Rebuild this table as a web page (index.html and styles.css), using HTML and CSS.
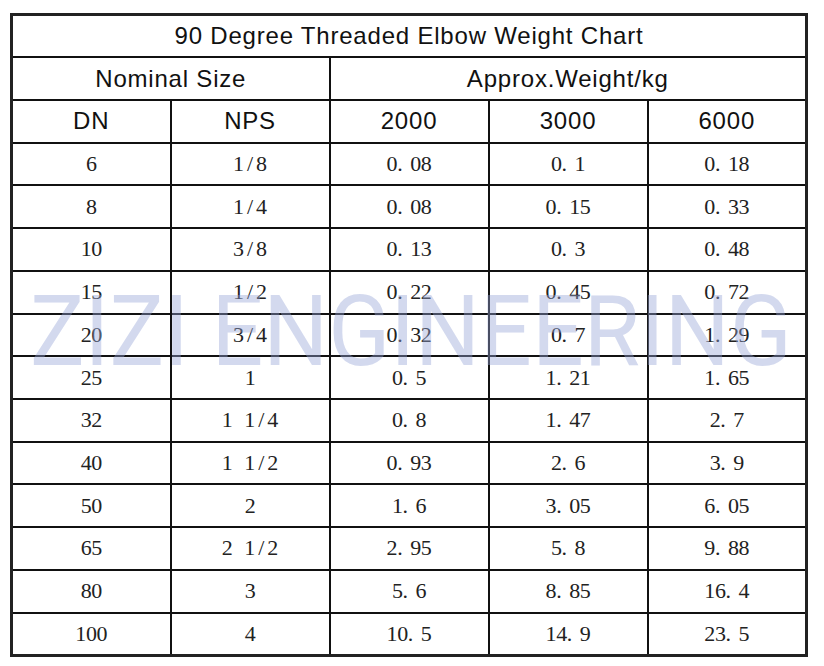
FILE: index.html
```html
<!DOCTYPE html>
<html lang="en">
<head>
<meta charset="utf-8">
<title>90 Degree Threaded Elbow Weight Chart</title>
<link rel="stylesheet" href="styles.css">
</head>
<body>
<div class="wrap">
<table class="chart">
  <colgroup><col><col><col><col><col></colgroup>
  <thead>
    <tr><th colspan="5" class="title">90 Degree Threaded Elbow Weight Chart</th></tr>
    <tr><th colspan="2">Nominal Size</th><th colspan="3">Approx.Weight/kg</th></tr>
    <tr><th>DN</th><th>NPS</th><th>2000</th><th>3000</th><th>6000</th></tr>
  </thead>
  <tbody>
    <tr><td>6</td><td class="frac">1/8</td><td>0<span class="pt">.</span>08</td><td>0<span class="pt">.</span>1</td><td>0<span class="pt">.</span>18</td></tr>
    <tr><td>8</td><td class="frac">1/4</td><td>0<span class="pt">.</span>08</td><td>0<span class="pt">.</span>15</td><td>0<span class="pt">.</span>33</td></tr>
    <tr><td>10</td><td class="frac">3/8</td><td>0<span class="pt">.</span>13</td><td>0<span class="pt">.</span>3</td><td>0<span class="pt">.</span>48</td></tr>
    <tr><td>15</td><td class="frac">1/2</td><td>0<span class="pt">.</span>22</td><td>0<span class="pt">.</span>45</td><td>0<span class="pt">.</span>72</td></tr>
    <tr><td>20</td><td class="frac">3/4</td><td>0<span class="pt">.</span>32</td><td>0<span class="pt">.</span>7</td><td>1<span class="pt">.</span>29</td></tr>
    <tr><td>25</td><td>1</td><td>0<span class="pt">.</span>5</td><td>1<span class="pt">.</span>21</td><td>1<span class="pt">.</span>65</td></tr>
    <tr><td>32</td><td class="frac">1 1/4</td><td>0<span class="pt">.</span>8</td><td>1<span class="pt">.</span>47</td><td>2<span class="pt">.</span>7</td></tr>
    <tr><td>40</td><td class="frac">1 1/2</td><td>0<span class="pt">.</span>93</td><td>2<span class="pt">.</span>6</td><td>3<span class="pt">.</span>9</td></tr>
    <tr><td>50</td><td>2</td><td>1<span class="pt">.</span>6</td><td>3<span class="pt">.</span>05</td><td>6<span class="pt">.</span>05</td></tr>
    <tr><td>65</td><td class="frac">2 1/2</td><td>2<span class="pt">.</span>95</td><td>5<span class="pt">.</span>8</td><td>9<span class="pt">.</span>88</td></tr>
    <tr><td>80</td><td>3</td><td>5<span class="pt">.</span>6</td><td>8<span class="pt">.</span>85</td><td>16<span class="pt">.</span>4</td></tr>
    <tr><td>100</td><td>4</td><td>10<span class="pt">.</span>5</td><td>14<span class="pt">.</span>9</td><td>23<span class="pt">.</span>5</td></tr>
  </tbody>
</table>
<div class="watermark">ZIZI ENGINEERING</div>
</div>
</body>
</html>
```
FILE: styles.css
```css
html, body {
  margin: 0;
  padding: 0;
  background: #ffffff;
}

.wrap {
  position: relative;
  width: 798px;
  margin: 13px 0 0 10px;
}

.chart {
  width: 798px;
  border-collapse: collapse;
  table-layout: fixed;
  border: 3px solid #222;
}

.chart col {
  width: 20%;
}

.chart tr {
  height: 42.73px;
}

.chart th,
.chart td {
  border: 2px solid #111;
  padding: 0;
  text-align: center;
  vertical-align: middle;
}

.chart th {
  font-family: "Liberation Sans", Arial, sans-serif;
  font-weight: normal;
  font-size: 24px;
  letter-spacing: 0.8px;
  color: #111;
}

.chart td {
  font-family: "Liberation Serif", "Times New Roman", serif;
  font-size: 22px;
  color: #222;
  letter-spacing: -0.4px;
}

.chart td.frac {
  letter-spacing: 3px;
  padding-left: 3px;
}

.pt {
  margin-right: 0.36em;
}

.watermark {
  position: absolute;
  left: 20px;
  top: 264px;
  font-family: "Roboto", "Liberation Sans", sans-serif;
  font-weight: 400;
  font-size: 98px;
  line-height: 110px;
  white-space: nowrap;
  color: rgba(150, 165, 215, 0.42);
  transform: scaleX(0.93);
  transform-origin: left top;
  pointer-events: none;
}
```
